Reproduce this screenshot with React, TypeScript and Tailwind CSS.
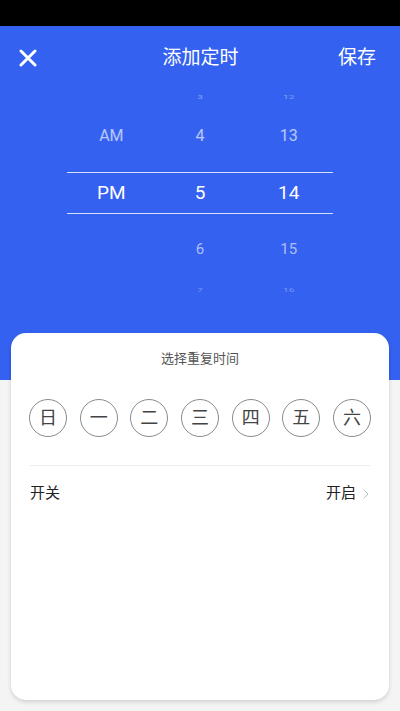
import { ChevronRight } from "lucide-react"

const DAYS = ["日", "一", "二", "三", "四", "五", "六"]

const cjk = { fontFamily: "Roboto, 'Noto Sans CJK SC', sans-serif" }

function PickerRow({
  cells,
  className,
  textClass,
}: {
  cells: string[]
  className: string
  textClass: string
}) {
  return (
    <div className={"grid grid-cols-3 items-center " + className}>
      {cells.map((c, i) => (
        <div key={i} className={"flex justify-center " + textClass}>
          {c}
        </div>
      ))}
    </div>
  )
}

export default function App() {
  return (
    <div className="w-[400px] h-[711px] bg-[#f4f4f5] flex flex-col overflow-hidden" style={cjk}>
      <div className="h-[26px] bg-black shrink-0" />

      <div className="bg-[#3461f0] pb-[84px] shrink-0">
        <div className="h-[64px] flex items-center justify-between px-[19px]">
          <svg width="18" height="18" viewBox="0 0 18 18" className="shrink-0">
            <path d="M2 2 L16 16 M16 2 L2 16" stroke="#fff" strokeWidth="3" strokeLinecap="round" />
          </svg>
          <span className="text-white text-[19px] pl-[26px]">添加定时</span>
          <span className="text-white text-[19px] pr-[5px]">保存</span>
        </div>

        <div className="mx-[67px]">
          <PickerRow
            cells={["", "3", "12"]}
            className="h-[14px]"
            textClass="text-white/40 text-[10px] leading-none scale-y-50"
          />
          <PickerRow
            cells={["AM", "4", "13"]}
            className="h-[64px]"
            textClass="text-white/65 text-[16px]"
          />
          <PickerRow
            cells={["PM", "5", "14"]}
            className="h-[42px] mt-[4px] border-y border-white/80"
            textClass="text-white text-[19px]"
          />
          <PickerRow
            cells={["", "6", "15"]}
            className="h-[70px]"
            textClass="text-white/60 text-[15px]"
          />
          <PickerRow
            cells={["", "7", "16"]}
            className="h-[12px]"
            textClass="text-white/35 text-[10px] leading-none scale-y-50"
          />
        </div>
      </div>

      <div className="mx-[11px] -mt-[47px] h-[367px] bg-white rounded-[15px] shadow-[0_2px_4px_rgba(0,0,0,0.15)] flex flex-col">
        <div className="pt-[16px] text-center text-[13px] text-[#555]">选择重复时间</div>

        <div className="flex justify-between px-[18px] mt-[30px]">
          {DAYS.map((d) => (
            <div
              key={d}
              className="w-[38px] h-[38px] rounded-full border border-[#8a8a8a] flex items-center justify-center text-[18px] text-[#444]"
            >
              {d}
            </div>
          ))}
        </div>

        <div className="mx-[19px] mt-[28px] border-t border-[#ececec]" />

        <div className="flex items-center justify-between mx-[19px] h-[56px]">
          <span className="text-[15px] text-[#222]">开关</span>
          <div className="flex items-center gap-[2px]">
            <span className="text-[15px] text-[#222]">开启</span>
            <ChevronRight className="w-[16px] h-[16px] text-[#bbb] -mr-[4px]" strokeWidth={1.5} />
          </div>
        </div>
      </div>
    </div>
  )
}
